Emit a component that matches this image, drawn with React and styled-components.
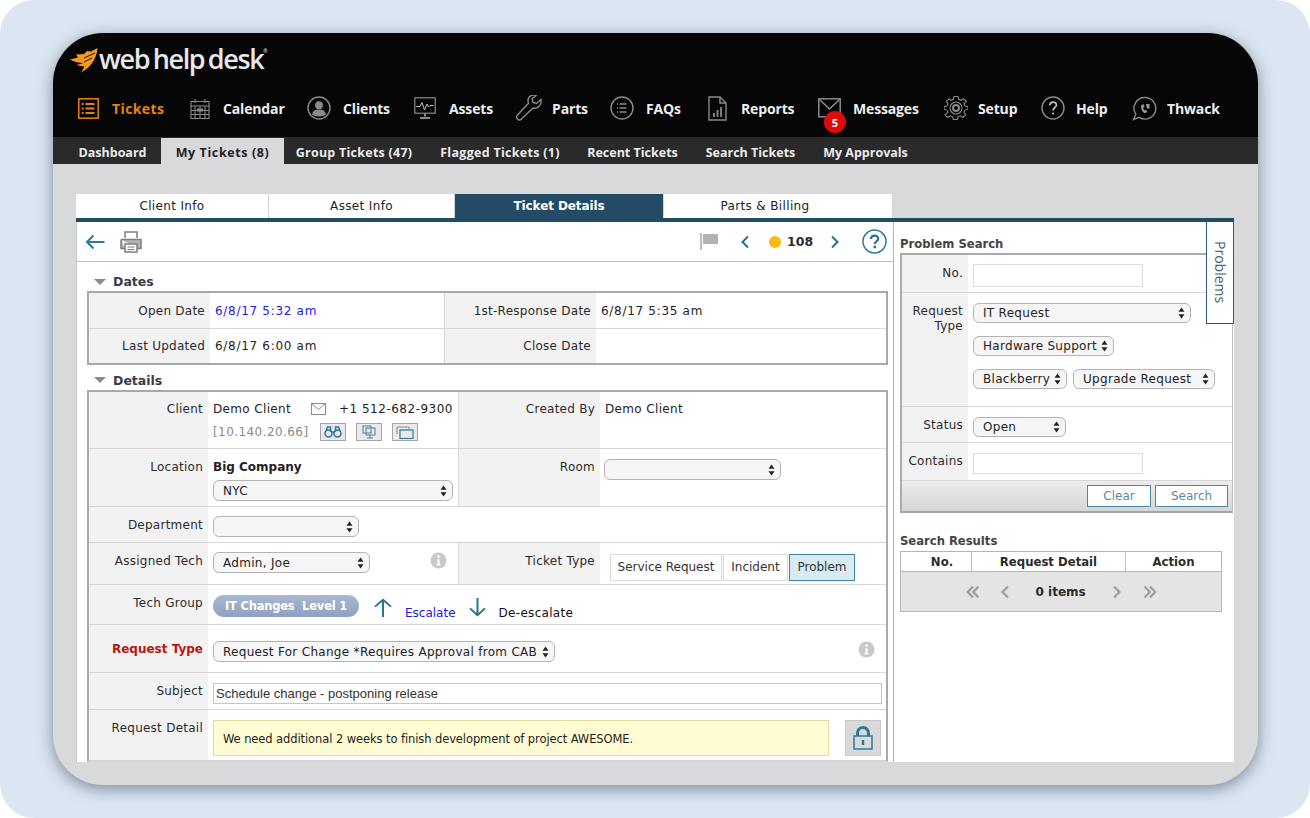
import React from "react";
import styled, { createGlobalStyle } from "styled-components";

const Global = createGlobalStyle`
  html, body { margin: 0; padding: 0; background: #fff; }
  * { box-sizing: border-box; }
`;
const Page = styled.div`
  width: 1310px; height: 818px; background: #dce6f2; border-radius: 34px;
  padding: 33px 52px 33px 53px; font-family: "DejaVu Sans", sans-serif; font-size: 12px; color: #222; overflow: hidden;
`;
const Window = styled.div`
  width: 1205px; height: 752px; border-radius: 50px; overflow: hidden; background: #d8d9da;
  box-shadow: 0 4px 16px rgba(50, 60, 80, 0.55); display: flex; flex-direction: column;
`;
const TopBar = styled.header`
  height: 104px; background: #060606; display: flex; flex-direction: column; flex: none;
`;
const LogoRow = styled.div`
  height: 55px; padding: 15px 0 0 17px; display: flex; align-items: flex-start;
`;
const LogoText = styled.div`
  font-family: "Open Sans", sans-serif; font-weight: 600; font-size: 27px; line-height: 24px; letter-spacing: -1.4px; margin-top: -1px;
  color: #e8e8e8; margin-left: 1px; word-spacing: -2px; sup { font-size: 5px; vertical-align: top; line-height: 8px; letter-spacing: 0; }
`;
const NavBar = styled.nav`
  display: flex; padding-left: 25px; height: 40px; align-items: center;
`;
const NavItem = styled.div`
  width: ${p => p.$w}px; flex: none; display: flex; align-items: center; position: relative; letter-spacing: ${p => (p.$active ? "0.4px" : "-0.15px")};
  font-family: "Open Sans", sans-serif; font-weight: 700; font-size: 14px; color: ${p => (p.$active ? "#e8830f" : "#eeeeee")};
`;
const NavIcon = styled.span`
  width: ${p => p.$slot}px; flex: none; display: flex; align-items: center; height: 28px;
`;
const Badge = styled.span`
  position: absolute; left: 6px; top: 17px; width: 22px; height: 22px; border-radius: 50%; background: #e00a0a; letter-spacing: 0;
  color: #fff; font-size: 11px; font-weight: 700; display: flex; align-items: center; justify-content: center;
`;
const SubNav = styled.nav`
  height: 27px; background: #2a2a2a; display: flex; padding-left: 11px; flex: none; align-items: flex-end;
`;
const SubItem = styled.div`
  width: ${p => p.$w}px; height: 26px; display: flex; align-items: center; justify-content: center; flex: none;
  font-family: "Open Sans", sans-serif; font-weight: 700; font-size: 12.5px; padding-top: 3px; letter-spacing: ${p => p.$ls || 0}px;
  background: ${p => (p.$active ? "#d8d9da" : "transparent")}; color: ${p => (p.$active ? "#222" : "#ececec")};
`;
const Content = styled.main`
  padding: 30px 24px 23px 23px; flex: 1; display: flex; flex-direction: column; min-height: 0;
`;
const Tabs = styled.div`
  display: grid; grid-template-columns: 193px 186px 209px 229px; width: 817px; height: 24px; flex: none;
`;
const Tab = styled.div`
  display: flex; align-items: center; justify-content: center; background: ${p => (p.$active ? "#234b66" : "#fff")};
  color: ${p => (p.$active ? "#fff" : "#222")}; font-weight: ${p => (p.$active ? 700 : 400)}; padding-right: ${p => p.$pr || 0}px;
  border-right: 1px solid #d4d4d4; font-size: 12px; letter-spacing: ${p => (p.$active ? "-0.1px" : "0.35px")};
`;
const Panel = styled.div`
  flex: 1; min-height: 0; border-top: 4px solid #234b66; display: flex; background: #fff; overflow: hidden; position: relative;
`;
const LeftCol = styled.section`
  width: 818px; flex: none; border-left: 1px solid #c8c8c8; border-right: 1px solid #b5b5b5; overflow: hidden;
`;
const Toolbar = styled.div`
  height: 40px; border-bottom: 1px solid #bdbdbd; display: flex; align-items: center; padding-left: 8px;
`;
const PrintSlot = styled.span` margin-left: 15px; display: flex; `;
const ToolRight = styled.div`
  margin-left: auto; display: flex; align-items: center;
`;
const TicketNo = styled.span`
  font-weight: 700; font-size: 12.5px; margin: 0 17px 0 6px; color: #2b2b2b; width: 26px;
`;
const Dot = styled.span`
  width: 12px; height: 12px; border-radius: 50%; background: #fdb913; margin-left: 19px;
`;
const Chev = styled.span` display: flex; margin-right: ${p => p.$mr || 0}px; margin-left: ${p => p.$ml || 0}px; `;
const SectionHead = styled.div`
  height: ${p => p.$h}px; padding: ${p => p.$pt}px 0 0 17px; display: flex; align-items: center; font-weight: 700; font-size: 12.5px; color: #3a3a4a;
  &::before { content: ""; border-left: 6px solid transparent; border-right: 6px solid transparent; border-top: 6px solid #8a8a8a; margin-right: 7px; }
`;
const FormTable = styled.div`
  margin-left: 10px; width: 801px; border: 2px solid #a9a9a9; border-bottom-color: ${p => (p.$open ? "#d2d2d2" : "#a9a9a9")};
`;
const Row = styled.div`
  display: grid; grid-template-columns: ${p => p.$cols}; height: ${p => p.$h}px;
  border-bottom: ${p => (p.$last ? "0" : "1px solid #d6d6d6")};
`;
const Label = styled.div`
  background: #f2f2f2; text-align: right; padding: ${p => p.$pt ?? 10}px 5px 0 0; line-height: ${p => p.$lh || 16}px; color: ${p => p.$color || "#2a2a2a"};
  font-weight: ${p => (p.$bold ? 700 : 400)}; border-left: ${p => (p.$div ? "1px solid #d6d6d6" : "0")}; letter-spacing: ${p => (p.$bold ? 0 : 0.25)}px;
`;
const CenterLabel = styled(Label)`
  padding-top: 0; display: flex; align-items: center; justify-content: flex-end;
`;
const Value = styled.div`
  padding: ${p => p.$pt ?? 10}px ${p => p.$pr ?? 5}px 0 ${p => p.$pl ?? 5}px; line-height: 16px; color: ${p => p.$color || "#222"};
  display: ${p => (p.$flex ? "flex" : "block")}; align-items: flex-start; justify-content: ${p => p.$justify || "flex-start"};
  gap: ${p => p.$gap || 0}px; letter-spacing: ${p => p.$ls ?? 0.35}px;
`;
const CenterValue = styled(Value)`
  padding-top: 0; display: flex; align-items: center;
`;
const Line = styled.div`
  display: flex; align-items: center; margin-top: ${p => p.$mt || 0}px;
`;
const Phone = styled.span` margin-left: auto; letter-spacing: 0.5px; `;
const Mail = styled.span` margin-left: 20px; display: flex; `;
const Ip = styled.span` color: #8a8a8a; width: 107px; letter-spacing: 0.43px; `;
const IconBtn = styled.span`
  width: 26px; height: 18px; background: #e9e9e9; border: 1px solid #a5a5a5; display: flex; align-items: center; justify-content: center; margin-right: 10px;
`;
const Bold = styled.div` font-weight: 700; letter-spacing: 0; `;
const SelectBox = styled.div`
  width: ${p => p.$w}px; height: ${p => p.$h || 21}px; flex: none; border: 1.5px solid #b4b4b4; border-radius: 6px; background: #f6f6f6; letter-spacing: 0.3px;
  display: flex; align-items: center; justify-content: space-between; padding: 0 5px 0 9px; margin-top: ${p => p.$mt || 0}px; color: #222; font-size: 12px; white-space: nowrap;
`;
const SegBtn = styled.div`
  height: 27px; padding: 0 ${p => p.$px ?? 5}px 2px; width: ${p => p.$w}px; display: flex; align-items: center; justify-content: center; letter-spacing: 0;
  border: 1.5px solid ${p => (p.$on ? "#3d85a1" : "#d8d8d8")}; background: ${p => (p.$on ? "#d8ebf3" : "#fff")}; color: #333;
`;
const Pill = styled.div`
  width: 146px; height: 22px; border-radius: 11px; background: linear-gradient(#a8b8d2, #90a1bf); color: #fff; font-weight: 700; font-size: 11.5px;
  display: flex; align-items: center; justify-content: center; white-space: pre; letter-spacing: -0.2px;
`;
const LowText = styled.span` margin-top: 10px; color: ${p => p.$color || "#111"}; letter-spacing: ${p => p.$ls || 0}px; `;
const ArrowSlot = styled.span` display: flex; margin-top: 3px; margin-left: ${p => p.$ml || 0}px; `;
const TextField = styled.div`
  height: 21px; width: ${p => p.$w}px; border: 1px solid #c6c6c6; background: #fff; padding-left: 2px; line-height: 19px; letter-spacing: 0;
  font-family: "Liberation Sans", sans-serif; font-size: 13px; color: #333;
`;
const PlainInput = styled.div`
  width: 170px; height: ${p => p.$h || 23}px; border: 1.5px solid #dcdcdc; background: #fff;
`;
const Note = styled.div`
  width: 616px; height: 36px; background: #fffcd3; border: 1px solid #e0dd9f; padding: 2px 0 0 9px; display: flex; align-items: center; font-size: 11.5px; color: #222; letter-spacing: -0.09px;
`;
const LockBtn = styled.div`
  width: 36px; height: 36px; background: #d9d9d9; border: 1px solid #c8c8c8; display: flex; align-items: center; justify-content: center; margin-left: 16px;
`;
const RightCol = styled.aside`
  flex: 1; padding-left: 6px; overflow: hidden;
`;
const SideHead = styled.div`
  font-weight: 700; font-size: 11.6px; line-height: 16px; color: #444; padding-top: ${p => p.$pt}px; height: ${p => p.$h}px;
`;
const SearchBox = styled.div`
  width: 333px; border: 2px solid #ababab; border-right: 1px solid #bcbcbc; border-bottom: 2px solid #a5a5a5;
`;
const Stack = styled.div` display: flex; flex-direction: column; gap: 13px; `;
const Inline = styled.div` display: flex; gap: 6px; `;
const Foot = styled.div`
  height: 30px; background: linear-gradient(#ececec, #d6d6d6); display: flex; justify-content: flex-end; gap: 4px; padding: 4px 4px 0 0;
`;
const FootBtn = styled.div`
  height: 22px; width: ${p => p.$w}px; background: #fff; border: 1.5px solid #4b89a5; color: #5a8aa4; display: flex; align-items: center; justify-content: center;
`;
const ResultTable = styled.div`
  width: 322px; border: 1.5px solid #b5b5b5;
`;
const ResultHead = styled.div`
  display: grid; grid-template-columns: 70px 154px 1fr; height: 20px; border-bottom: 1.5px solid #b5b5b5; background: #fff;
`;
const HeadCell = styled.div`
  display: flex; align-items: center; justify-content: center; font-weight: 700; font-size: 11.7px; color: #2b2b2b; padding-left: ${p => p.$pl || 0}px;
  border-left: ${p => (p.$first ? "0" : "1.5px solid #c0c0c0")};
`;
const Pager = styled.div`
  height: 39px; background: #e4e4e4; display: flex; align-items: center; justify-content: center;
`;
const PagerIcon = styled.span` display: flex; margin-right: ${p => p.$mr || 0}px; `;
const PagerText = styled.span` font-weight: 700; width: 50px; text-align: center; margin-right: 26px; white-space: nowrap; color: #2b2b2b; `;
const SideTab = styled.div`
  position: absolute; top: 0; right: 0; width: 28px; height: 102px; background: #fff; border: 1.5px solid #2f5a76; border-top: 0;
  writing-mode: vertical-rl; display: flex; align-items: center; justify-content: center; color: #3f6075; font-size: 14px;
  font-family: "Open Sans", sans-serif;
`;

const S = { fill: "none", stroke: "#8a8a8a", strokeWidth: 1.4 };
const Arrows = () => (
  <svg width="7" height="12" viewBox="0 0 7 12"><path d="M3.5 0.5 6.5 4.7H.5zM3.5 11.5 .5 7.3h6z" fill="#222" /></svg>
);
const Select = ({ children, ...p }) => (
  <SelectBox {...p}><span>{children}</span><Arrows /></SelectBox>
);
const Swoosh = () => (
  <svg width="28" height="25" viewBox="0 0 28 25">
    <path d="M0 11.5 8 9.5 6 6.5 14 6 17 3 21 3.5 27.5 0C27 6 25 12 21 16.5 18.5 19.5 15 22.5 11 24.5 13 21.5 14 20 14 18 11 18.5 8.5 18 6.5 16.5 9 16.5 11 16 13 15 8 15 4 13.5 0 11.5Z" fill="#f39a1c" />
    <path d="M14 10 25 5M14 14 22 10" stroke="#060606" strokeWidth="0.9" />
  </svg>
);
const nav = [
  ["Tickets", 112, 34, true, <svg width="21" height="21" viewBox="0 0 21 21" fill="none" stroke="#e8830f" strokeWidth="1.5"><rect x=".8" y=".8" width="19.4" height="19.4" /><path d="M7.5 6h9M7.5 10.5h9M7.5 15h9M3.8 6h1.8M3.8 10.5h1.8M3.8 15h1.8" strokeWidth="2" /></svg>],
  ["Calendar", 117, 33, false, <svg width="20" height="21" viewBox="0 0 20 21" {...S}><path d="M1 3.5h18v17H1zM1 8h18M5 1v4M15 1v4M9 3.5h2M1 12.5h18M1 16.5h18M5 8v12.5M10 8v12.5M15 8v12.5" strokeWidth="1.1" /><rect x="7" y="10.5" width="6" height="3" fill="#8a8a8a" stroke="none" /></svg>],
  ["Clients", 107, 36, false, <svg width="24" height="24" viewBox="0 0 24 24" {...S}><circle cx="12" cy="12" r="11" /><circle cx="12" cy="9.2" r="3.9" fill="#8a8a8a" stroke="none" /><path d="M5 18.5c.7-3.8 3.5-5 7-5s6.300 1.200 7 5c-2 2.500-12 2.500-14 0z" fill="#8a8a8a" stroke="none" /></svg>],
  ["Assets", 102, 35, false, <svg width="22" height="23" viewBox="0 0 22 23" {...S}><rect x=".8" y=".8" width="20.400" height="15.400" strokeWidth="1.200" /><path d="M2 9.500h4l2-4 2.500 7.500 2.500-6 1.500 3 1.500-1.500h3.500" strokeWidth="1" stroke="#c0c0c0" /><path d="M11 16.500v3M6 21h10" strokeWidth="2" /></svg>],
  ["Parts", 94, 36, false, <svg width="26" height="26" viewBox="0 0 26 26" {...S}><path d="M25 4.500l-4.500 4-3.500-1-1-3.500 4-3.500c-3.500-1.300-8 .8-8 5 0 1.300.2 2 .5 2.800L1.500 20c-1.500 1.500-.8 3.500 0 4.200.8.800 2.700 1.300 4-.2L17 13c4.500 1.200 9-3 8-8.500z" /></svg>],
  ["FAQs", 98, 36, false, <svg width="24" height="24" viewBox="0 0 24 24" {...S}><circle cx="12" cy="12" r="11" /><path d="M9.500 8h7M9.500 12h7M9.500 16h7M7 8h1M7 12h1M7 16h1" strokeWidth="1.700" /></svg>],
  ["Reports", 110, 33, false, <svg width="19" height="25" viewBox="0 0 19 25" {...S}><path d="M1 1h11l6 6v17H1zM12 1v6h6" /><path d="M6 21v-4M9.500 21v-7M13 21V11" strokeWidth="1.800" /></svg>],
  ["Messages", 126, 35, false, <svg width="23" height="20" viewBox="0 0 23 20" {...S}><rect x=".8" y=".8" width="21.400" height="18" strokeWidth="1.500" /><path d="M1 1l10.500 10L22 1" strokeWidth="1.500" /></svg>],
  ["Setup", 97, 34, false, <svg width="24" height="24" viewBox="0 0 24 24" {...S}><path d="M10 1h4l.6 3 2.400 1 2.600-1.700 2.800 2.800L20 8.700l1 2.300 3 .6v3l-3 .6-1 2.300 1.700 2.600-2.800 2.800-2.600-1.700-2.400 1-.6 2.800h-4l-.6-2.800-2.400-1-2.600 1.700-2.800-2.800L4 17.500l-1-2.300-3-.6v-3l3-.6 1-2.300-1.700-2.600 2.800-2.800L7 5l2.400-1z" transform="translate(0 -.5) scale(1 .96)" strokeWidth="1.100" /><circle cx="12" cy="12" r="6" strokeWidth="1.100" /><circle cx="12" cy="12" r="3" strokeWidth="2" /></svg>],
  ["Help", 91, 35, false, <svg width="24" height="24" viewBox="0 0 24 24" {...S}><circle cx="12" cy="12" r="11" /><path d="M8.800 9.300c.2-4.300 6.600-4.300 6.600-.3 0 2.600-3.300 2.500-3.300 5.500" strokeWidth="1.700" stroke="#bdbdbd" /><circle cx="12" cy="17.500" r="1.100" fill="#bdbdbd" stroke="none" /></svg>],
  ["Thwack", 90, 35, false, <svg width="25" height="25" viewBox="0 0 25 25" {...S}><path d="M13 1.500a10.800 10.800 0 1 1-5.800 19.900L1.500 23.500l2.300-5.300A10.800 10.800 0 0 1 13 1.500z" /><path d="M9 9.500l2.500-1.500 1 3-1.500 1 1.500 2.500 1.500-.8 1.300 2.300-2.500 1.300C10 16 9 13 9 9.500zM14 8h3.500v4.500H15" fill="#9a9a9a" stroke="none" /></svg>],
];
const subs = [["Dashboard", 97, false, 0], ["My Tickets (8)", 123, true, 0.6], ["Group Tickets (47)", 140, false, 0.25], ["Flagged Tickets (1)", 152, false, 0.3], ["Recent Tickets", 113, false, 0], ["Search Tickets", 123, false, 0], ["My Approvals", 107, false, 0]];

const Info = () => (
  <svg width="17" height="17" viewBox="0 0 17 17"><circle cx="8.500" cy="8.500" r="8" fill="#c9c9c9" /><path d="M7.300 7.300h2.300v5h1v1.200H6.600v-1.200h.9V8.500h-.2zM8.500 3.300a1.300 1.300 0 1 1 0 2.600 1.300 1.300 0 0 1 0-2.600z" fill="#fff" /></svg>
);
const Teal = "#2a7490";
const LeftChev = ({ c = "#2a6f8c", w = 2 }) => <svg width="10" height="14" viewBox="0 0 10 14" fill="none" stroke={c} strokeWidth={w}><path d="M8 1.500 2.500 7 8 12.500" /></svg>;
const RightChev = ({ c = "#2a6f8c", w = 2 }) => <svg width="10" height="14" viewBox="0 0 10 14" fill="none" stroke={c} strokeWidth={w}><path d="M2 1.500 7.500 7 2 12.500" /></svg>;
const DblLeft = () => <svg width="14" height="14" viewBox="0 0 14 14" fill="none" stroke="#9c9c9c" strokeWidth="2.200"><path d="M7 1.500 1.800 7 7 12.500M12.500 1.500 7.300 7l5.200 5.500" /></svg>;
const DblRight = () => <svg width="14" height="14" viewBox="0 0 14 14" fill="none" stroke="#9c9c9c" strokeWidth="2.200"><path d="M1.500 1.500 6.700 7l-5.200 5.500M7 1.500 12.200 7 7 12.500" /></svg>;

const D1 = "121px 234px 152px 1fr";
const D2 = "119px 250px 142px 1fr";
const D3 = "119px 1fr";
const S1 = "66px 1fr";

export default function App() {
  return (
    <Page>
      <Global />
      <Window>
        <TopBar>
          <LogoRow>
            <Swoosh />
            <LogoText>web help desk<sup>®</sup></LogoText>
          </LogoRow>
          <NavBar>
            {nav.map(([t, w, slot, a, ic]) => (
              <NavItem key={t} $w={w} $active={a}>
                <NavIcon $slot={slot}>{ic}</NavIcon>
                {t}
                {t === "Messages" && <Badge>5</Badge>}
              </NavItem>
            ))}
          </NavBar>
        </TopBar>
        <SubNav>
          {subs.map(([t, w, a, ls]) => <SubItem key={t} $w={w} $active={a} $ls={ls}>{t}</SubItem>)}
        </SubNav>
        <Content>
          <Tabs>
            <Tab>Client Info</Tab>
            <Tab>Asset Info</Tab>
            <Tab $active>Ticket Details</Tab>
            <Tab $pr={26}>Parts &amp; Billing</Tab>
          </Tabs>
          <Panel>
            <LeftCol>
              <Toolbar>
                <svg width="20" height="16" viewBox="0 0 20 16" fill="none" stroke="#2c7a9b" strokeWidth="2"><path d="M19.500 8H2M8.500 1.500 2 8l6.500 6.500" /></svg>
                <PrintSlot>
                  <svg width="22" height="22" viewBox="0 0 22 22" fill="none" stroke="#7d7d7d" strokeWidth="1.500"><path d="M5 7V1h12v6" /><path d="M1 8.500h20v9H17M5 17.500H1v-9" fill="#b5b5b5" /><rect x="5" y="13" width="12" height="8" fill="#fff" /><path d="M7.500 16h7M7.500 18.500h7" strokeWidth="1" /></svg>
                </PrintSlot>
                <ToolRight>
                  <Chev $mr={22}>
                    <svg width="18" height="17" viewBox="0 0 18 17"><rect x="0" y="0" width="2" height="17" fill="#bcbcbc" /><rect x="3" y="1" width="15" height="10" fill="#b2b2b2" /></svg>
                  </Chev>
                  <LeftChev />
                  <Dot />
                  <TicketNo>108</TicketNo>
                  <RightChev />
                  <Chev $ml={22} $mr={6}>
                    <svg width="25" height="25" viewBox="0 0 25 25"><circle cx="12.500" cy="12.500" r="11.500" fill="none" stroke="#2c7a9b" strokeWidth="1.500" /><path d="M9 10c.2-4.400 7.200-4.400 7.200-.3 0 2.800-3.400 2.600-3.400 5.300" fill="none" stroke="#2c6f8e" strokeWidth="2.200" /><circle cx="12.800" cy="18" r="1.400" fill="#2c6f8e" /></svg>
                  </Chev>
                </ToolRight>
              </Toolbar>
              <SectionHead $h={29} $pt={10}>Dates</SectionHead>
              <FormTable>
                <Row $cols={D1} $h={36}>
                  <CenterLabel>Open Date</CenterLabel>
                  <CenterValue $color="#1a1ae0" $ls={0.7}>6/8/17 5:32 am</CenterValue>
                  <CenterLabel $div>1st-Response Date</CenterLabel>
                  <CenterValue $ls={0.7}>6/8/17 5:35 am</CenterValue>
                </Row>
                <Row $cols={D1} $h={34} $last>
                  <CenterLabel>Last Updated</CenterLabel>
                  <CenterValue $ls={0.7}>6/8/17 6:00 am</CenterValue>
                  <CenterLabel $div>Close Date</CenterLabel>
                  <CenterValue />
                </Row>
              </FormTable>
              <SectionHead $h={25} $pt={5}>Details</SectionHead>
              <FormTable $open>
                <Row $cols={D2} $h={57}>
                  <Label $pt={9}>Client</Label>
                  <Value $pt={9}>
                    <Line>
                      Demo Client
                      <Mail><svg width="15" height="12" viewBox="0 0 15 12" fill="none" stroke="#8a8a8a"><rect x=".5" y=".5" width="14" height="11" /><path d="M.5.500l7 6 7-6" /></svg></Mail>
                      <Phone>+1 512-682-9300</Phone>
                    </Line>
                    <Line $mt={6}>
                      <Ip>[10.140.20.66]</Ip>
                      <IconBtn><svg width="18" height="12" viewBox="0 0 18 12" fill="none" stroke="#2c7a9b" strokeWidth="1.500"><circle cx="4.500" cy="7.500" r="3.500" /><circle cx="13.500" cy="7.500" r="3.500" /><path d="M2 5l1.500-4h3V6M16 5l-1.500-4h-3V6M7 6h4" /></svg></IconBtn>
                      <IconBtn><svg width="14" height="14" viewBox="0 0 14 14" fill="none" stroke="#4a7f96"><rect x="4" y="3" width="9" height="7" /><rect x="1" y="1" width="8" height="7" /><path d="M5 13h6M8 10v3" /></svg></IconBtn>
                      <IconBtn><svg width="18" height="13" viewBox="0 0 18 13" fill="none" stroke="#2c7a9b"><path d="M1 8V1h12v2" stroke="#8a8a8a" /><rect x="4" y="4" width="13" height="8.500" strokeWidth="1.200" /></svg></IconBtn>
                    </Line>
                  </Value>
                  <Label $pt={9} $div>Created By</Label>
                  <Value $pt={9}>Demo Client</Value>
                </Row>
                <Row $cols={D2} $h={58}>
                  <Label>Location</Label>
                  <Value>
                    <Bold>Big Company</Bold>
                    <Select $w={240} $mt={5}>NYC</Select>
                  </Value>
                  <Label $div>Room</Label>
                  <Value $pl={4}><Select $w={177} /></Value>
                </Row>
                <Row $cols={D3} $h={36}>
                  <Label>Department</Label>
                  <Value $pt={9}><Select $w={146} /></Value>
                </Row>
                <Row $cols={D2} $h={42}>
                  <Label>Assigned Tech</Label>
                  <Value $pt={9} $flex $justify="space-between" $pr={11}>
                    <Select $w={157}>Admin, Joe</Select>
                    <Info />
                  </Value>
                  <Label $div>Ticket Type</Label>
                  <Value $pt={11} $pl={10} $flex $gap={1}>
                    <SegBtn $w={112}>Service Request</SegBtn>
                    <SegBtn $w={65}>Incident</SegBtn>
                    <SegBtn $w={66} $on>Problem</SegBtn>
                  </Value>
                </Row>
                <Row $cols={D3} $h={40}>
                  <Label>Tech Group</Label>
                  <Value $flex $gap={13}>
                    <Pill>IT Changes  Level 1</Pill>
                    <ArrowSlot $ml={2}><svg width="18" height="19" viewBox="1 0 18 21" fill="none" stroke={Teal} strokeWidth="2" preserveAspectRatio="none"><path d="M10 21V2M2 9.500 10 2l8 7.500" /></svg></ArrowSlot>
                    <LowText $color="#1a1ae0">Escalate</LowText>
                    <ArrowSlot><svg width="17" height="19" viewBox="1 0 17 21" fill="none" stroke={Teal} strokeWidth="2" preserveAspectRatio="none"><path d="M9.500 0v19M2 11.500 9.500 19 17 11.500" /></svg></ArrowSlot>
                    <LowText $ls={0.3}>De-escalate</LowText>
                  </Value>
                </Row>
                <Row $cols={D3} $h={48}>
                  <Label $pt={16} $bold $color="#b81515">Request Type</Label>
                  <Value $pt={16} $flex $justify="space-between" $pr={11}>
                    <Select $w={342}>Request For Change *Requires Approval from CAB</Select>
                    <Info />
                  </Value>
                </Row>
                <Row $cols={D3} $h={37}>
                  <Label>Subject</Label>
                  <Value><TextField $w={669}>Schedule change - postponing release</TextField></Value>
                </Row>
                <Row $cols={D3} $h={50} $last>
                  <Label>Request Detail</Label>
                  <Value $flex>
                    <Note>We need additional 2 weeks to finish development of project AWESOME.</Note>
                    <LockBtn><svg width="20" height="24" viewBox="0 0 20 24" fill="none" stroke="#2c7a9b"><path d="M4.500 10V7a5.500 5.500 0 0 1 11 0v3" strokeWidth="3" /><rect x="1" y="10" width="18" height="13" strokeWidth="1.500" /><path d="M10 14v5" strokeWidth="2.500" /></svg></LockBtn>
                  </Value>
                </Row>
              </FormTable>
            </LeftCol>
            <RightCol>
              <SideHead $pt={14} $h={31}>Problem Search</SideHead>
              <SearchBox>
                <Row $cols={S1} $h={38}>
                  <Label>No.</Label>
                  <Value $pt={9}><PlainInput /></Value>
                </Row>
                <Row $cols={S1} $h={114}>
                  <Label $pt={11} $lh={15}>Request<br />Type</Label>
                  <Value>
                    <Stack>
                      <Select $w={218} $h={20}>IT Request</Select>
                      <Select $w={141} $h={20}>Hardware Support</Select>
                      <Inline>
                        <Select $w={94} $h={20}>Blackberry</Select>
                        <Select $w={142} $h={20}>Upgrade Request</Select>
                      </Inline>
                    </Stack>
                  </Value>
                </Row>
                <Row $cols={S1} $h={36}>
                  <Label>Status</Label>
                  <Value><Select $w={93} $h={20}>Open</Select></Value>
                </Row>
                <Row $cols={S1} $h={38}>
                  <Label>Contains</Label>
                  <Value><PlainInput $h={21} /></Value>
                </Row>
                <Foot>
                  <FootBtn $w={64}>Clear</FootBtn>
                  <FootBtn $w={73}>Search</FootBtn>
                </Foot>
              </SearchBox>
              <SideHead $pt={20} $h={38}>Search Results</SideHead>
              <ResultTable>
                <ResultHead>
                  <HeadCell $first $pl={12}>No.</HeadCell>
                  <HeadCell>Request Detail</HeadCell>
                  <HeadCell>Action</HeadCell>
                </ResultHead>
                <Pager>
                  <PagerIcon $mr={20}><DblLeft /></PagerIcon>
                  <PagerIcon $mr={26}><LeftChev c="#9c9c9c" w={2.2} /></PagerIcon>
                  <PagerText>0 items</PagerText>
                  <PagerIcon $mr={21}><RightChev c="#9c9c9c" w={2.2} /></PagerIcon>
                  <PagerIcon><DblRight /></PagerIcon>
                </Pager>
              </ResultTable>
            </RightCol>
            <SideTab>Problems</SideTab>
          </Panel>
        </Content>
      </Window>
    </Page>
  );
}
